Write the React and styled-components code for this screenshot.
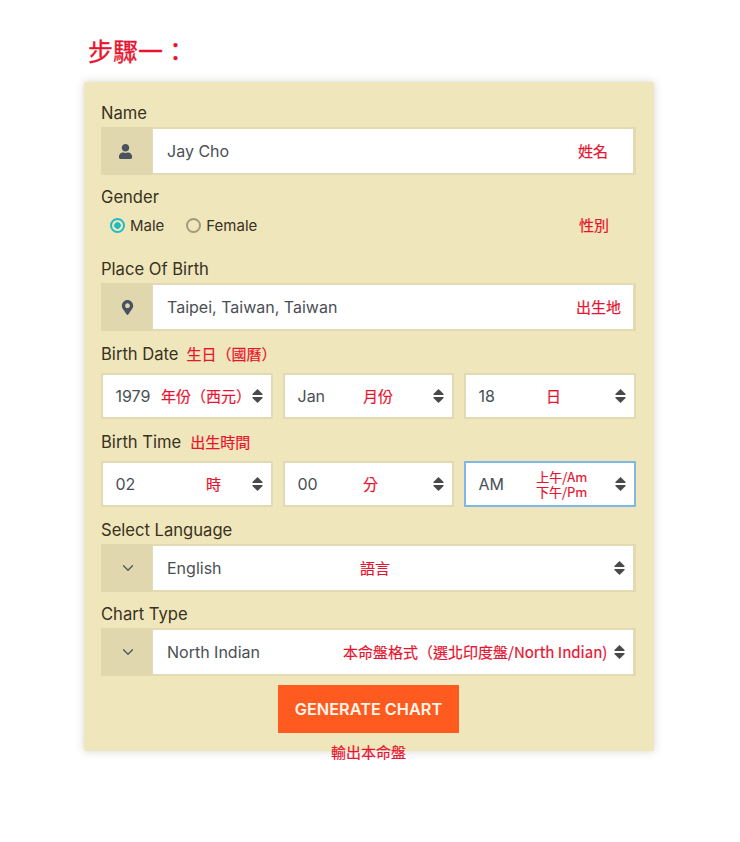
import React from "react";
import styled, { createGlobalStyle } from "styled-components";
import { FaUser, FaMapMarkerAlt } from "react-icons/fa";
import { ChevronDown } from "lucide-react";

const GlobalStyle = createGlobalStyle`
  html, body {
    margin: 0;
    background: #fff;
  }
  body {
    font-family: Inter, "Noto Sans CJK TC", sans-serif;
  }
`;

const Page = styled.div`
  width: 740px;
  height: 842px;
  padding: 33px 0 0 84px;
  box-sizing: border-box;
`;

const Heading = styled.h1`
  margin: 0 0 14px 4px;
  font: 400 25px/35px "Noto Sans CJK TC", sans-serif;
  -webkit-text-stroke: 0.3px #e8132f;
  color: #e8132f;
  text-spacing-trim: space-all;
`;

const Card = styled.form`
  position: relative;
  width: 570px;
  height: 669px;
  box-sizing: border-box;
  padding: 19px 18px 0 17px;
  background: #efe6bb;
  border-radius: 2px;
  box-shadow: 0 0 8px rgba(60, 50, 20, 0.22);
`;

const Section = styled.div`
  margin-bottom: ${(p) => p.$gap ?? 10}px;
`;

const Label = styled.label`
  display: flex;
  align-items: center;
  height: 24px;
  margin-bottom: ${(p) => p.$gap ?? 2}px;
  font-size: 16.6px;
  color: #38321f;
`;

const LabelNote = styled.span`
  margin-left: ${(p) => p.$gap}px;
  font: 400 15px/24px "Noto Sans CJK TC", sans-serif;
  -webkit-text-stroke: 0.2px #e8132f;
  color: #e8132f;
  text-spacing-trim: space-all;
`;

const Group = styled.div`
  display: flex;
  height: 48px;
`;

const Addon = styled.div`
  flex: 0 0 51px;
  box-sizing: border-box;
  padding-left: 2px;
  display: flex;
  align-items: center;
  justify-content: center;
  background: #e0d7ae;
  color: #4a5260;
  font-size: 15px;
`;

const UserIcon = styled(FaUser)`
  margin-right: 4px;
`;

const Field = styled.div`
  position: relative;
  flex: 1;
  min-width: 0;
  display: flex;
  align-items: center;
  box-sizing: border-box;
  height: 46px;
  padding-left: 12.5px;
  background: #fff;
  border: 2px solid ${(p) => (p.$focused ? "#80b6ea" : "#e3dab4")};
  font-size: 16px;
  color: #4a4f55;
`;

const GroupField = styled(Field)`
  height: 48px;
  padding-left: 14px;
  border-width: 2px 3px 2px 1px;
`;

const Note = styled.span`
  position: absolute;
  left: ${(p) => p.$left}px;
  top: 50%;
  transform: translateY(-50%);
  font: 400 ${(p) => p.$size ?? 15}px/${(p) => p.$line ?? 18}px "Noto Sans CJK TC", sans-serif;
  -webkit-text-stroke: 0.2px #e8132f;
  color: #e8132f;
  white-space: nowrap;
  text-align: center;
  text-spacing-trim: space-all;
`;

const Arrows = styled.svg`
  position: absolute;
  right: 8px;
  top: 50%;
  width: 11px;
  height: 15px;
  transform: translateY(-50%);
  fill: #4a4a4a;
`;

const SelectArrows = () => (
  <Arrows viewBox="0 0 11 15">
    <path d="M5.5 0.5 L10.6 5.6 Q11 6.4 10 6.4 H1 Q0 6.4 0.4 5.6 Z" />
    <path d="M5.5 14.5 L10.6 9.4 Q11 8.6 10 8.6 H1 Q0 8.6 0.4 9.4 Z" />
  </Arrows>
);

const Triple = styled.div`
  display: grid;
  grid-template-columns: 172px 171px 172px;
  column-gap: 10px;
`;

const RadioRow = styled.div`
  position: relative;
  display: flex;
  align-items: center;
  height: 24px;
  margin: 4px 0 20px;
  padding-left: 9px;
  font-size: 15px;
  color: #38321f;
`;

const RadioItem = styled.span`
  display: flex;
  align-items: center;
  gap: 5px;
  margin-right: 22px;
`;

const RadioDot = styled.span`
  width: 15px;
  height: 15px;
  box-sizing: border-box;
  border-radius: 50%;
  background: ${(p) => (p.$on ? "radial-gradient(circle, #1fbcc4 0 3px, transparent 3.5px)" : "transparent")};
  border: 2px solid ${(p) => (p.$on ? "#1fbcc4" : "#a39a7c")};
`;

const ButtonRow = styled.div`
  display: flex;
  justify-content: center;
  margin-top: -1px;
`;

const Generate = styled.button`
  width: 181px;
  height: 48px;
  padding: 0;
  border: 0;
  background: #ff5a1f;
  color: #fff6ea;
  font: 600 16.3px Inter, sans-serif;
`;

const OutputNote = styled.span`
  position: absolute;
  left: 247px;
  bottom: -10px;
  font: 400 15px/18px "Noto Sans CJK TC", sans-serif;
  -webkit-text-stroke: 0.2px #e8132f;
  color: #e8132f;
`;

export default function App() {
  return (
    <Page>
      <GlobalStyle />
      <Heading>步驟一：</Heading>
      <Card>
        <Section>
          <Label>Name</Label>
          <Group>
            <Addon><UserIcon /></Addon>
            <GroupField>
              Jay Cho
              <Note $left={425}>姓名</Note>
            </GroupField>
          </Group>
        </Section>

        <Label>Gender</Label>
        <RadioRow>
          <RadioItem><RadioDot $on />Male</RadioItem>
          <RadioItem><RadioDot />Female</RadioItem>
          <Note $left={478}>性別</Note>
        </RadioRow>

        <Section $gap={11}>
          <Label>Place Of Birth</Label>
          <Group>
            <Addon><FaMapMarkerAlt /></Addon>
            <GroupField>
              Taipei, Taiwan, Taiwan
              <Note $left={423}>出生地</Note>
            </GroupField>
          </Group>
        </Section>

        <Section $gap={11}>
          <Label $gap={7}>Birth Date<LabelNote $gap={8}>生日（國曆）</LabelNote></Label>
          <Triple>
            <Field>1979<Note $left={58}>年份（西元）</Note><SelectArrows /></Field>
            <Field>Jan<Note $left={78}>月份</Note><SelectArrows /></Field>
            <Field>18<Note $left={80}>日</Note><SelectArrows /></Field>
          </Triple>
        </Section>

        <Section $gap={11}>
          <Label $gap={7}>Birth Time<LabelNote $gap={9}>出生時間</LabelNote></Label>
          <Triple>
            <Field>02<Note $left={103}>時</Note><SelectArrows /></Field>
            <Field>00<Note $left={78}>分</Note><SelectArrows /></Field>
            <Field $focused>
              AM
              <Note $left={70} $size={13} $line={15}>上午/Am<br />下午/Pm</Note>
              <SelectArrows />
            </Field>
          </Triple>
        </Section>

        <Section>
          <Label>Select Language</Label>
          <Group>
            <Addon><ChevronDown size={18} strokeWidth={1.6} /></Addon>
            <GroupField>
              English
              <Note $left={207}>語言</Note>
              <SelectArrows />
            </GroupField>
          </Group>
        </Section>

        <Section>
          <Label>Chart Type</Label>
          <Group>
            <Addon><ChevronDown size={18} strokeWidth={1.6} /></Addon>
            <GroupField>
              North Indian
              <Note $left={190}>本命盤格式（選北印度盤/North Indian)</Note>
              <SelectArrows />
            </GroupField>
          </Group>
        </Section>

        <ButtonRow>
          <Generate type="button">GENERATE CHART</Generate>
        </ButtonRow>
        <OutputNote>輸出本命盤</OutputNote>
      </Card>
    </Page>
  );
}
